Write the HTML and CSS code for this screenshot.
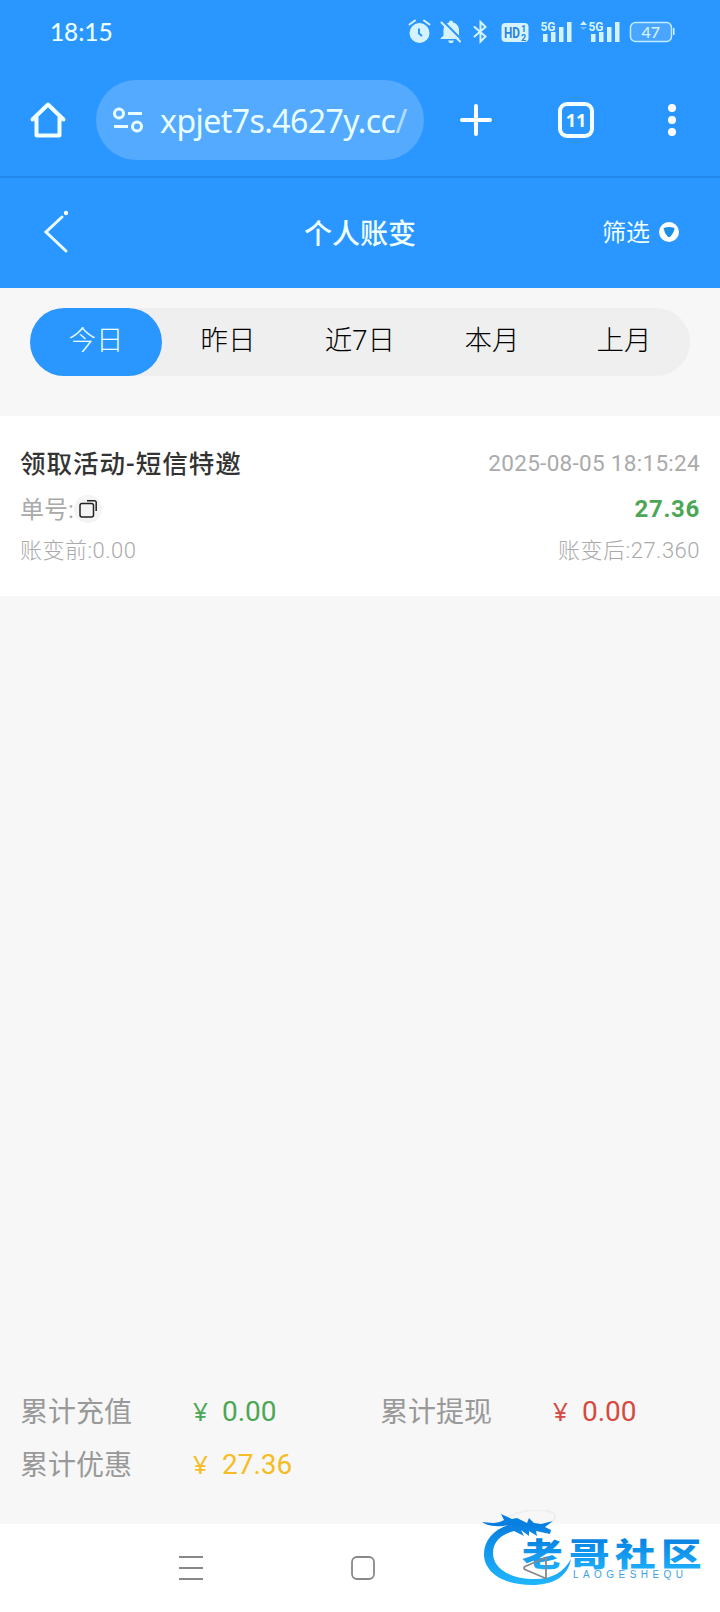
FILE: index.html
```
<!DOCTYPE html>
<html lang="zh-CN">
<head>
    <meta charset="UTF-8">
    <meta name="viewport" content="width=device-width, initial-scale=1.0">
    <title>个人账变</title>
    <link rel="stylesheet" href="styles.css">
</head>
<body>
    <div class="status-bar">
        <span class="clock">18:15</span>
        <svg class="status-icons" width="290" height="30" viewBox="0 0 290 30">
            <!-- alarm -->
            <circle cx="20.5" cy="18" r="10"/>
            <path class="line" d="M10.500 9.500l5.500-4M30.500 9.500l-5.500-4"/>
            <path class="cut" d="M20 13.500v5l3 2.500"/>
            <!-- muted bell -->
            <path d="M52 5.500a2 2 0 0 1 2 2c4 1 6 4 6 8v5l3 3.500H41l3.500-3.500v-5c0-4 2-7 5.500-8a2 2 0 0 1 2-2zM49 25.500h6l-1.500 2.500h-3z"/>
            <path class="cut" d="M44 6l20 20"/>
            <path class="line" d="M42.500 7.500l18.500 19"/>
            <!-- bluetooth -->
            <path class="line" d="M75.500 12l11 9.500-5 5V7l5 5-11 9.500"/>
            <!-- hd -->
            <rect x="102.500" y="8" width="27" height="19" rx="4"/>
            <text class="hd" x="105" y="23" textLength="16" lengthAdjust="spacingAndGlyphs">HD</text>
            <text class="hd-small" x="122" y="17">1</text>
            <text class="hd-small" x="122" y="25.500">2</text>
            <!-- signals -->
            <text class="net" x="141.500" y="15.500" textLength="15" lengthAdjust="spacingAndGlyphs">5G</text>
            <path d="M144 19h4.500v8H144zM152 17h4.500v10H152zM160 12h4.500v15H160zM168 7h4.500v20H168z"/>
            <path d="M181 10l3.500-4 3.500 4z"/>
            <path class="dim" d="M181 12h7l-3.500 3z"/>
            <text class="net" x="189.500" y="15.500" textLength="15" lengthAdjust="spacingAndGlyphs">5G</text>
            <path d="M192 19h4.500v8H192zM200 17h4.500v10H200zM208 12h4.500v15H208zM216 7h4.500v20H216z"/>
            <!-- battery -->
            <rect class="battery" x="231.500" y="7.500" width="41" height="19" rx="5"/>
            <path d="M274 13h1.500v7H274z"/>
            <text class="level" x="242.500" y="22.500">47</text>
        </svg>
    </div>

    <div class="browser-bar">
        <svg class="home" width="40" height="40" viewBox="0 0 40 40">
            <path d="M4.500 19.500L20 4.500l15.500 15M8.500 17.500v18h23v-18"/>
        </svg>
        <div class="address">
            <svg width="32" height="28" viewBox="0 0 32 28">
                <circle cx="7" cy="7.500" r="4.500"/>
                <circle cx="25" cy="20.500" r="4.500"/>
                <path d="M16 7.500h14M2 20.500h14"/>
            </svg>
            <span class="url">xpjet7s.4627y.cc<i>/</i></span>
        </div>
        <svg class="plus" width="32" height="32" viewBox="0 0 32 32"><path d="M2 16h28M16 2v28"/></svg>
        <div class="tab-count">11</div>
        <svg class="more" width="8" height="32" viewBox="0 0 8 32">
            <circle cx="4" cy="4" r="4"/><circle cx="4" cy="16" r="4"/><circle cx="4" cy="28" r="4"/>
        </svg>
    </div>

    <header class="page-header">
        <svg class="back" width="26" height="44" viewBox="0 0 26 44">
            <path d="M19 7L3 22 23 41"/>
            <circle cx="23" cy="3" r="2.200"/>
        </svg>
        <h1>个人账变</h1>
        <div class="filter">
            <span>筛选</span>
            <svg width="20" height="20" viewBox="0 0 20 20">
                <circle cx="10" cy="10" r="10"/>
                <path d="M4.500 6q6-2 11 0 0 4-4.500 9h-2Q5 10.500 4.500 6z"/>
            </svg>
        </div>
    </header>

    <nav class="tabs">
        <a class="tab active">今日</a>
        <a class="tab">昨日</a>
        <a class="tab">近7日</a>
        <a class="tab">本月</a>
        <a class="tab">上月</a>
    </nav>

    <main class="records">
        <div class="record">
            <div class="row row-title">
                <span class="name">领取活动-短信特邀</span>
                <span class="time">2025-08-05 18:15:24</span>
            </div>
            <div class="row row-order">
                <span class="order"><span class="order-label">单号:</span>
                    <span class="copy">
                        <svg width="20" height="20" viewBox="0 0 20 20">
                            <rect x="2" y="4.500" width="13.500" height="13.500" rx="2"/>
                            <path d="M9 1.800h7.500a1.700 1.700 0 0 1 1.700 1.700v8.500"/>
                        </svg>
                    </span>
                </span>
                <span class="amount">27.36</span>
            </div>
            <div class="row row-balance">
                <span>账变前:0.00</span>
                <span>账变后:27.360</span>
            </div>
        </div>
    </main>

    <footer class="totals">
        <div class="total"><span class="label">累计充值</span><span class="yen green">¥</span><span class="green">0.00</span></div>
        <div class="total"><span class="label">累计提现</span><span class="yen red">¥</span><span class="red">0.00</span></div>
        <div class="total"><span class="label">累计优惠</span><span class="yen gold">¥</span><span class="gold">27.36</span></div>
    </footer>

    <div class="system-nav">
        <svg width="26" height="26" viewBox="0 0 26 26"><path d="M1 2h24M1 13h24M1 24h24"/></svg>
        <svg width="26" height="26" viewBox="0 0 26 26"><rect x="2" y="2" width="22" height="22" rx="5"/></svg>
        <svg class="watermark" width="230" height="84" viewBox="0 0 230 84">
            <defs>
                <linearGradient id="blue" x1="0" y1="0" x2="0" y2="1">
                    <stop offset="0.150" stop-color="#087fe0"/>
                    <stop offset="1" stop-color="#20b6ff"/>
                </linearGradient>
            </defs>
            <path class="glow" d="M24 9c14-9 38-12 49-6q4 3 0 8"/>
            <path fill="url(#blue)" d="M28 15C13 20 4 31 4 44c0 19 20 31 48 31 22 0 36-9 39-26-7 13-19 20-36 20-26 0-42-11-42-26C13 31 22 24 34 21l10 5-3-6 8 6v-5l8 5-1-5 14 3 1-4-6-3 8-6-12 3-7-1-5-5-2 5-10-5-5 1-11-5 3 6C15 15 9 12 2 12c7 5 18 5 26 3z"/>
            <g class="brand" fill="url(#blue)">
                <text transform="translate(42 56) scale(1.270 1)">老</text>
                <text transform="translate(89 56) scale(1.270 1)">哥</text>
                <text transform="translate(135 56) scale(1.270 1)">社</text>
                <text transform="translate(181 56) scale(1.270 1)">区</text>
            </g>
            <text class="brand-en" x="93" y="68" textLength="110">LAOGESHEQU</text>
        </svg>
        <svg class="nav-back" width="26" height="26" viewBox="0 0 26 26"><path d="M24 2.500v21L3 14.500q-2-1.500 0-3z"/></svg>
    </div>
</body>
</html>
```

FILE: styles.css
```
* { box-sizing: border-box; }
html, body { height: 100%; }
body {
    margin: 0;
    display: flex;
    flex-direction: column;
    background: #f7f7f7;
    color: #333;
    font-family: Roboto, "Noto Sans CJK SC", sans-serif;
    overflow: hidden;
}
svg { display: block; flex: none; }

/* status bar */
.status-bar {
    height: 64px;
    flex: none;
    display: flex;
    justify-content: space-between;
    padding: 15px 31px 0 50px;
    background: #2a96ff;
    color: #eaffff;
}
.clock { font: 500 24.5px/34px Lato, sans-serif; letter-spacing: -0.1px; }
.status-icons { fill: #d5f3ff; stroke: none; }
.status-icons .line { fill: none; stroke: #d5f3ff; stroke-width: 2; stroke-linecap: round; }
.status-icons .cut { fill: none; stroke: #2a96ff; stroke-width: 2; }
.status-icons .dim { opacity: 0.4; }
.status-icons .hd { fill: #2a84d8; font: 700 14px Roboto, sans-serif; }
.status-icons .hd-small { fill: #2a84d8; font: 700 9px Roboto, sans-serif; }
.status-icons .net { font: 700 12.5px Roboto, sans-serif; }
.status-icons .battery { fill: rgba(255, 255, 255, 0.15); stroke: #c0ecff; stroke-width: 1.5; }
.status-icons .level { font: 500 16px Lato, sans-serif; }

/* browser toolbar */
.browser-bar {
    height: 114px;
    flex: none;
    display: flex;
    align-items: flex-start;
    padding: 16px 44px 0 28px;
    background: #2a96ff;
    border-bottom: 2px solid #2288ee;
}
.home { margin-top: 20px; fill: none; stroke: #f0ffff; stroke-width: 4; stroke-linecap: round; stroke-linejoin: round; }
.address {
    width: 328px;
    height: 80px;
    margin-left: 28px;
    display: flex;
    align-items: center;
    padding-left: 16px;
    border-radius: 40px;
    background: #54aaff;
}
.address svg { fill: none; stroke: #eaffff; stroke-width: 3; }
.url { margin-left: 16px; color: #eaffff; font: 32px "Noto Sans", sans-serif; letter-spacing: -0.55px; white-space: nowrap; }
.url i { font-style: normal; opacity: 0.6; }
.plus { margin: 24px 0 0 36px; stroke: #fff; stroke-width: 4; stroke-linecap: round; }
.tab-count {
    width: 36px;
    height: 36px;
    margin: 22px 0 0 66px;
    border: 4px solid #f4ffff;
    border-radius: 9px;
    color: #f4ffff;
    font: 700 18px/28px "Noto Sans", sans-serif;
    text-align: center;
}
.more { margin: 24px 0 0 74px; fill: #fff; }

/* page header */
.page-header {
    height: 110px;
    flex: none;
    display: grid;
    grid-template-columns: 1fr auto 1fr;
    align-items: center;
    padding: 0 41px 2px 43px;
    background: #2a96ff;
    color: #f0ffff;
}
.back { fill: none; stroke: #eaffff; stroke-width: 3; stroke-linecap: round; }
.back circle { fill: #fff; stroke: none; }
h1 { margin: 0 2px 0 0; font-size: 28px; font-weight: 500; }
.filter { display: flex; justify-content: flex-end; align-items: center; gap: 9px; font-size: 24px; }
.filter span { padding-bottom: 3px; }
.filter circle { fill: #fff; }
.filter path { fill: #1b8fe4; }

/* date tabs */
.tabs {
    height: 68px;
    flex: none;
    display: flex;
    margin: 20px 30px 40px;
    border-radius: 34px;
    background: #efefef;
}
.tab {
    flex: 1;
    border-radius: 34px;
    color: #000;
    font-size: 27.5px;
    font-weight: 300;
    line-height: 66px;
    text-align: center;
}
.tab.active { background: #2a96ff; color: #eaffff; }

/* records */
.records { flex: 1; }
.record { height: 180px; padding: 24px 20px 0; background: #fff; }
.row { display: flex; justify-content: space-between; align-items: center; color: #aaa; }
.row-title { height: 46px; }
.row-order { height: 46px; }
.row-balance { height: 36px; padding-bottom: 5px; font-size: 22px; font-weight: 300; letter-spacing: 0.5px; }
.name { padding-bottom: 4px; color: #333; font-size: 25.5px; font-weight: 500; letter-spacing: 1px; }
.time { font-size: 22.5px; letter-spacing: 0.3px; }
.order { display: flex; align-items: center; font-size: 24px; }
.order-label { padding-bottom: 3px; }
.copy {
    width: 28px;
    height: 28px;
    display: flex;
    align-items: center;
    justify-content: center;
    border-radius: 50%;
    background: #f4f4f4;
}
.copy svg { fill: none; stroke: #222; stroke-width: 1.5; }
.amount { color: #4ca755; font-size: 24px; font-weight: 700; letter-spacing: 0.7px; }

/* totals */
.totals {
    height: 139px;
    flex: none;
    display: grid;
    grid-template-columns: 360px 360px;
    grid-auto-rows: 53px;
}
.total { display: flex; align-items: center; padding: 0 0 1px 20px; font-size: 28px; }
.label { width: 173px; padding-bottom: 3px; color: #999; font-size: 28px; }
.yen { width: 29px; font: 26px/30px "Noto Sans", sans-serif; }
.green { color: #4ca755; }
.red { color: #d54a3f; }
.gold { color: #f5bd22; }

/* system navigation */
.system-nav {
    position: relative;
    height: 88px;
    flex: none;
    display: flex;
    align-items: center;
    gap: 146px;
    padding-left: 178px;
    background: #fff;
}
.system-nav > svg { fill: none; stroke: #888; stroke-width: 1.8; }
.system-nav > .watermark { position: absolute; left: 480px; top: -14px; stroke: none; }
.nav-back { position: relative; }
.watermark .glow { fill: none; stroke: #eee; stroke-width: 2; }
.watermark .brand { font: 900 32px "Noto Sans CJK SC", sans-serif; }
.watermark .brand-en { fill: #3c9fe4; font: 400 10px "Liberation Sans", sans-serif; }
```
